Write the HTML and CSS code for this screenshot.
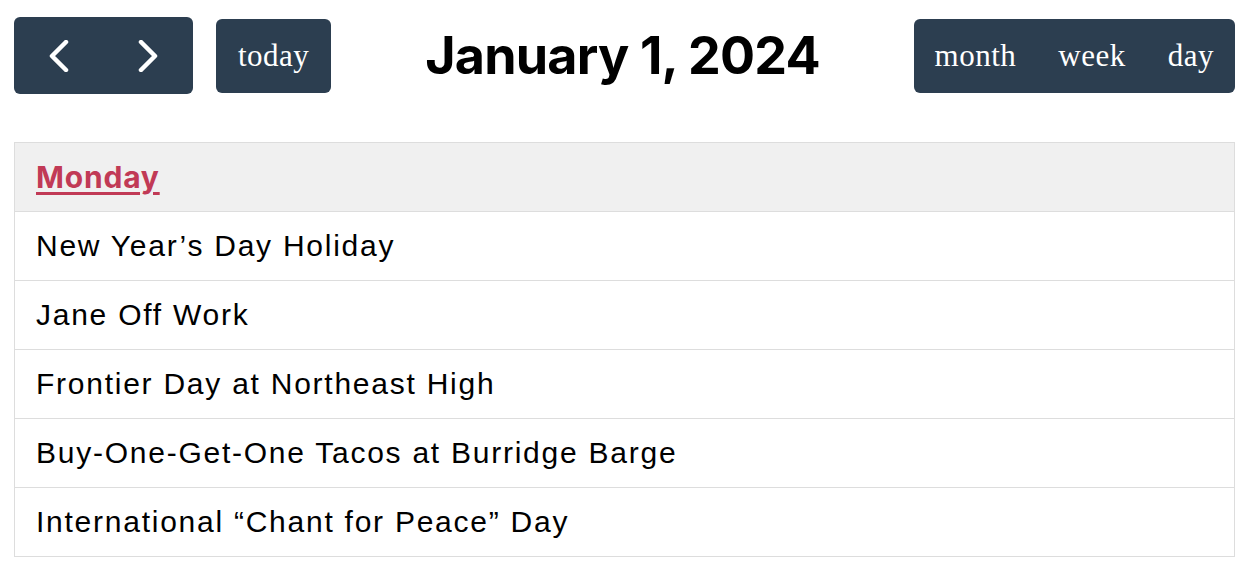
FILE: index.html
```html
<!DOCTYPE html>
<html lang="en">
<head>
    <meta charset="UTF-8">
    <meta name="viewport" content="width=device-width, initial-scale=1.0">
    <title>Calendar - Day List</title>
    <link rel="stylesheet" href="styles.css">
</head>
<body>
    <div class="calendar">
        <div class="toolbar">
            <div class="toolbar-chunk">
                <div class="btn-group">
                    <button class="btn btn-icon" title="Previous day">
                        <svg width="20" height="32" viewBox="0 0 20 32"><polyline points="17,2 3,16 17,30" /></svg>
                    </button>
                    <button class="btn btn-icon" title="Next day">
                        <svg width="20" height="32" viewBox="0 0 20 32"><polyline points="3,2 17,16 3,30" /></svg>
                    </button>
                </div>
                <button class="btn btn-today">today</button>
            </div>
            <h2 class="title">January 1, 2024</h2>
            <div class="btn-group btn-views">
                <button class="btn">month</button>
                <button class="btn">week</button>
                <button class="btn">day</button>
            </div>
        </div>
        <div class="list">
            <div class="list-day"><a href="#" class="day-link">Monday</a></div>
            <div class="list-item">New Year’s Day Holiday</div>
            <div class="list-item">Jane Off Work</div>
            <div class="list-item">Frontier Day at Northeast High</div>
            <div class="list-item">Buy-One-Get-One Tacos at Burridge Barge</div>
            <div class="list-item">International “Chant for Peace” Day</div>
        </div>
    </div>
</body>
</html>
```
FILE: styles.css
```css
body {
    margin: 0;
    padding: 17px 15px 0 14px;
    font-family: "Liberation Sans", Arial, sans-serif;
    color: #000;
    background: #fff;
}
.toolbar {
    display: flex;
    justify-content: space-between;
    align-items: center;
    height: 77px;
    margin-bottom: 48px;
}
.toolbar-chunk {
    display: flex;
    align-items: center;
}
.btn-group {
    display: flex;
}
.btn {
    background: #2c3e50;
    color: #fff;
    border: none;
    font-family: "Liberation Serif", "Times New Roman", serif;
    font-size: 31px;
    letter-spacing: 0.5px;
    height: 74px;
    padding: 0 21px;
    margin: 0;
    cursor: pointer;
}
.btn-group .btn {
    border-radius: 0;
}
.btn-group .btn:first-child {
    border-top-left-radius: 6px;
    border-bottom-left-radius: 6px;
}
.btn-group .btn:last-child {
    border-top-right-radius: 6px;
    border-bottom-right-radius: 6px;
}
.btn-icon {
    width: 89.5px;
    height: 77px;
    padding: 0;
    display: flex;
    justify-content: center;
    align-items: center;
}
.btn-icon svg polyline {
    fill: none;
    stroke: #fff;
    stroke-width: 4.5;
    stroke-linecap: round;
    stroke-linejoin: round;
}
.btn-today {
    margin-left: 23px;
    border-radius: 6px;
    padding: 0 22px;
}
.title {
    margin: 0;
    font-family: Inter, "Liberation Sans", sans-serif;
    font-weight: 700;
    font-size: 52px;
    letter-spacing: -0.8px;
}
.list {
    border: 1px solid #ddd;
}
.list-day {
    background: #f0f0f0;
    height: 68px;
    line-height: 68px;
    padding: 0 21px;
    border-bottom: 1px solid #ddd;
}
.day-link {
    font-family: Inter, "Liberation Sans", sans-serif;
    font-weight: 700;
    font-size: 30px;
    letter-spacing: 0.8px;
    color: #c13a56;
    text-decoration: underline;
    text-underline-offset: 4px;
}
.list-item {
    height: 68px;
    line-height: 68px;
    padding: 0 21px;
    font-size: 30px;
    letter-spacing: 1.75px;
    border-bottom: 1px solid #ddd;
}
.list-item:last-child {
    border-bottom: none;
}
```
